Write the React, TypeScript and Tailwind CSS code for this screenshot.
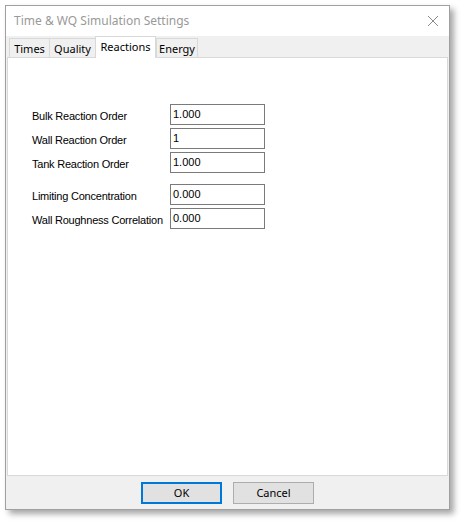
import React from 'react'

const font = { fontFamily: '"Segoe UI", "Noto Sans", "Open Sans", sans-serif' }

const rows = [
  { label: 'Bulk Reaction Order', value: '1.000' },
  { label: 'Wall Reaction Order', value: '1' },
  { label: 'Tank Reaction Order', value: '1.000' },
]

const rows2 = [
  { label: 'Limiting Concentration', value: '0.000' },
  { label: 'Wall Roughness Correlation', value: '0.000' },
]

const tabs = [
  { name: 'Times', w: 'w-[40px]' },
  { name: 'Quality', w: 'w-[46px]' },
  { name: 'Reactions', w: 'w-[61px]' },
  { name: 'Energy', w: 'w-[42px]' },
]

function Field({ label, value }: { label: string; value: string }) {
  return (
    <div className="flex h-[21px] items-center">
      <span className="w-[138px] pt-[3px] text-[11px] tracking-[-0.22px] text-black">{label}</span>
      <div className="flex h-[21px] w-[95px] items-center border border-[#7a7a7a] bg-white px-[2px] text-[11px] leading-none">
        {value}
      </div>
    </div>
  )
}

export default function App() {
  return (
    <div className="h-[522px] w-[461px] bg-white pl-[5px] pt-[5px]" style={{ fontFamily: 'Tahoma, "Liberation Sans", sans-serif' }}>
      <div className="flex h-[505px] w-[445px] flex-col border border-[#a0a0a0] bg-[#f0f0f0] shadow-[4px_4px_6px_rgba(0,0,0,0.35)]">
        {/* title bar */}
        <div className="flex h-[30px] items-center justify-between bg-white pl-[8px] pr-[10px]">
          <span className="text-[12px] text-[#999999]" style={font}>
            Time &amp; WQ Simulation Settings
          </span>
          <svg width="12" height="12" viewBox="0 0 12 12">
            <path d="M1 1 L11 11 M11 1 L1 11" stroke="#8a8a8a" strokeWidth="1" />
          </svg>
        </div>
        {/* tabs */}
        <div className="flex h-[21px] items-end pl-[3px]">
          {tabs.map((t) => {
            const active = t.name === 'Reactions'
            return (
              <div
                key={t.name}
                className={
                  active
                    ? `relative z-10 -mb-px flex h-[22px] ${t.w} items-start justify-center border border-b-0 border-[#d9d9d9] bg-white pt-[2px] text-[11px]`
                    : `flex h-[19px] ${t.w} items-center justify-center border border-b-0 border-r-0 border-[#d9d9d9] bg-[#f0f0f0] pt-[2px] text-[11px] last:border-r`
                }
                style={font}
              >
                {t.name}
              </div>
            )
          })}
        </div>
        {/* panel */}
        <div className="mx-[1px] flex h-[419px] flex-col border border-[#d9d9d9] bg-white pl-[24px] pt-[46px]">
          <div className="flex flex-col gap-[3px]">
            {rows.map((r) => (
              <Field key={r.label} {...r} />
            ))}
          </div>
          <div className="mt-[11px] flex flex-col gap-[3px]">
            {rows2.map((r) => (
              <Field key={r.label} {...r} />
            ))}
          </div>
        </div>
        {/* buttons */}
        <div className="flex flex-1 items-start justify-center gap-[11px] pt-[6px]">
          <button className="h-[22px] w-[81px] border-2 border-[#0078d7] bg-[#e1e1e1] text-[11px]" style={font}>
            OK
          </button>
          <button className="h-[22px] w-[81px] border border-[#adadad] bg-[#e1e1e1] text-[11px]" style={font}>
            Cancel
          </button>
        </div>
      </div>
    </div>
  )
}
